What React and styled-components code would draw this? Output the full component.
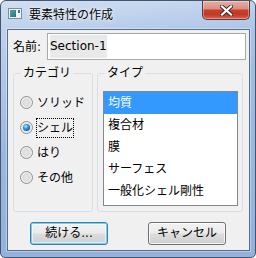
import React from 'react';
import styled, { createGlobalStyle } from 'styled-components';

const FONT = `"DejaVu Sans", "Noto Sans CJK JP", sans-serif`;

const Global = createGlobalStyle`
  html, body { margin: 0; padding: 0; background: #ffffff; }
  body { width: 256px; height: 258px; overflow: hidden; }
  * { box-sizing: border-box; }
`;

const Window = styled.div`
  width: 256px;
  height: 258px;
  border: 1px solid #44566f;
  border-radius: 6px 6px 5px 5px;
  padding: 0 5px 6px 6px;
  display: flex;
  flex-direction: column;
  background:
    linear-gradient(160deg, rgba(255,255,255,0.35) 0%, rgba(255,255,255,0) 45%),
    linear-gradient(to bottom, #b8cdeb 0px, #a5bfe4 30px, #9cb8df 140px, #93b1db 100%);
  font-family: ${FONT};
  font-size: 12px;
  color: #000;
  overflow: hidden;
`;

const TitleBar = styled.div`
  height: 28px;
  display: flex;
  align-items: flex-start;
  padding-left: 1px;
  flex: none;
`;

const AppIcon = styled.svg`
  margin-top: 7px;
  width: 14px;
  height: 11px;
  flex: none;
`;

const Title = styled.div`
  margin-left: 7px;
  margin-top: 6px;
  line-height: 16px;
  font-size: 12px;
  text-shadow: 0 0 5px rgba(255,255,255,0.95), 0 0 2px rgba(255,255,255,0.9);
`;

const CloseButton = styled.div`
  margin-left: auto;
  width: 48px;
  height: 19px;
  border: 1px solid #5b3c38;
  border-top: none;
  border-radius: 0 0 5px 5px;
  background: linear-gradient(to bottom, #e8b0a5 0%, #d98f81 42%, #c8402c 52%, #c23a26 75%, #dc6247 100%);
  box-shadow: inset 0 0 0 1px rgba(255,255,255,0.35);
  display: flex;
  align-items: center;
  justify-content: center;
`;

const Client = styled.div`
  flex: 1;
  border: 1px solid #566d8c;
  box-shadow: 0 0 0 1px rgba(255,255,255,0.35);
  background: #f0f0f0;
  display: flex;
  flex-direction: column;
  padding: 3px 3px 5px 5px;
`;

const NameRow = styled.div`
  display: flex;
  align-items: center;
  height: 27px;
`;

const NameLabel = styled.div`
  width: 34px;
  line-height: 16px;
`;

const TextBox = styled.div`
  flex: 1;
  height: 27px;
  border: 1px solid #a3a9b1;
  background: #fff;
  padding: 1px 2px;
  display: flex;
  align-items: stretch;
`;

const Selected = styled.span`
  background: #e9e9e9;
  line-height: 23px;
  font-size: 12px;
`;

const GroupsRow = styled.div`
  margin-top: 5px;
  height: 147px;
  display: flex;
  gap: 4px;
`;

const Group = styled.fieldset`
  margin: 0;
  padding: 0;
  min-width: 0;
  width: ${p => p.$w}px;
  height: 100%;
  border: 1px solid #d5dfe5;
  border-radius: 3px;
`;

const Legend = styled.legend`
  margin-left: 7px;
  padding: 0 2px;
  line-height: 16px;
  font-size: 12px;
`;

const RadioList = styled.div`
  padding: 9px 0 0 6px;
  display: flex;
  flex-direction: column;
`;

const RadioRow = styled.div`
  height: 25px;
  display: flex;
  align-items: center;
`;

const RadioCircle = styled.span`
  width: 13px;
  height: 13px;
  flex: none;
  border-radius: 50%;
  border: 1px solid #8c8e90;
  background: radial-gradient(circle at 50% 50%, #e6e6e6 0%, #dcdcdc 40%, #f4f4f4 75%, #fbfbfb 100%);
  display: flex;
  align-items: center;
  justify-content: center;
  &::after {
    content: '';
    width: 7px;
    height: 7px;
    border-radius: 50%;
    display: ${p => (p.$checked ? 'block' : 'none')};
    background: radial-gradient(circle at 40% 35%, #bfe9ff 0%, #3c9be0 35%, #135e9c 75%, #0b3c66 100%);
  }
`;

const RadioLabel = styled.span`
  margin-left: 3px;
  border: 1px dotted ${p => (p.$focused ? '#000' : 'transparent')};
  line-height: 18px;
  padding: 0;
  white-space: nowrap;
`;

const ListWrap = styled.div`
  padding: 10px 4px 0 5px;
`;

const ListBox = styled.div`
  width: 135px;
  height: 115px;
  border: 1px solid #828790;
  background: #fff;
  display: flex;
  flex-direction: column;
`;

const ListItem = styled.div`
  height: 22px;
  line-height: 22px;
  padding-left: 4px;
  white-space: nowrap;
  background: ${p => (p.$selected ? '#3399ff' : 'transparent')};
  color: ${p => (p.$selected ? '#fff' : '#000')};
`;

const ButtonRow = styled.div`
  margin-top: 10px;
  display: flex;
  gap: 40px;
  padding-left: 17px;
`;

const Button = styled.div`
  width: 78px;
  height: 23px;
  border: 1px solid ${p => (p.$default ? '#3c7fb1' : '#707070')};
  border-radius: 3px;
  background: linear-gradient(to bottom, #f2f2f2 0%, #ebebeb 49%, #dddddd 51%, #cfcfcf 100%);
  box-shadow: ${p => (p.$default
    ? 'inset 0 0 0 1px #66d3f8, inset 0 0 0 2px rgba(255,255,255,0.55)'
    : 'inset 0 0 0 1px rgba(255,255,255,0.75)')};
  line-height: 21px;
  text-align: center;
  font-size: 12px;
`;

const categories = ['ソリッド', 'シェル', 'はり', 'その他'];
const types = ['均質', '複合材', '膜', 'サーフェス', '一般化シェル剛性'];

export default function App() {
  return (
    <>
      <Global />
      <Window>
        <TitleBar>
          <AppIcon viewBox="0 0 14 11">
            <defs>
              <linearGradient id="ig" x1="0" y1="0" x2="1" y2="1">
                <stop offset="0" stopColor="#4fa99a" />
                <stop offset="1" stopColor="#2c6f8a" />
              </linearGradient>
            </defs>
            <rect x="0.5" y="0.5" width="13" height="10" fill="#eef2f5" stroke="#7d8c99" />
            <rect x="2" y="2" width="6" height="7" fill="url(#ig)" />
            <rect x="10" y="2" width="2" height="3" fill="#4d6f93" />
          </AppIcon>
          <Title>要素特性の作成</Title>
          <CloseButton>
            <svg width="13" height="11" viewBox="0 0 13 11">
              <path d="M2 1.5 L11 9.5 M11 1.5 L2 9.5" stroke="#3a2a28" strokeWidth="4" strokeLinecap="square" />
              <path d="M2 1.5 L11 9.5 M11 1.5 L2 9.5" stroke="#ffffff" strokeWidth="2.2" strokeLinecap="square" />
            </svg>
          </CloseButton>
        </TitleBar>
        <Client>
          <NameRow>
            <NameLabel>名前:</NameLabel>
            <TextBox>
              <Selected>Section-1</Selected>
            </TextBox>
          </NameRow>
          <GroupsRow>
            <Group $w={80}>
              <Legend>カテゴリ</Legend>
              <RadioList>
                {categories.map((c, i) => (
                  <RadioRow key={c}>
                    <RadioCircle $checked={i === 1} />
                    <RadioLabel $focused={i === 1}>{c}</RadioLabel>
                  </RadioRow>
                ))}
              </RadioList>
            </Group>
            <Group $w={146}>
              <Legend>タイプ</Legend>
              <ListWrap>
                <ListBox>
                  {types.map((t, i) => (
                    <ListItem key={t} $selected={i === 0}>{t}</ListItem>
                  ))}
                </ListBox>
              </ListWrap>
            </Group>
          </GroupsRow>
          <ButtonRow>
            <Button $default>続ける...</Button>
            <Button>キャンセル</Button>
          </ButtonRow>
        </Client>
      </Window>
    </>
  );
}
